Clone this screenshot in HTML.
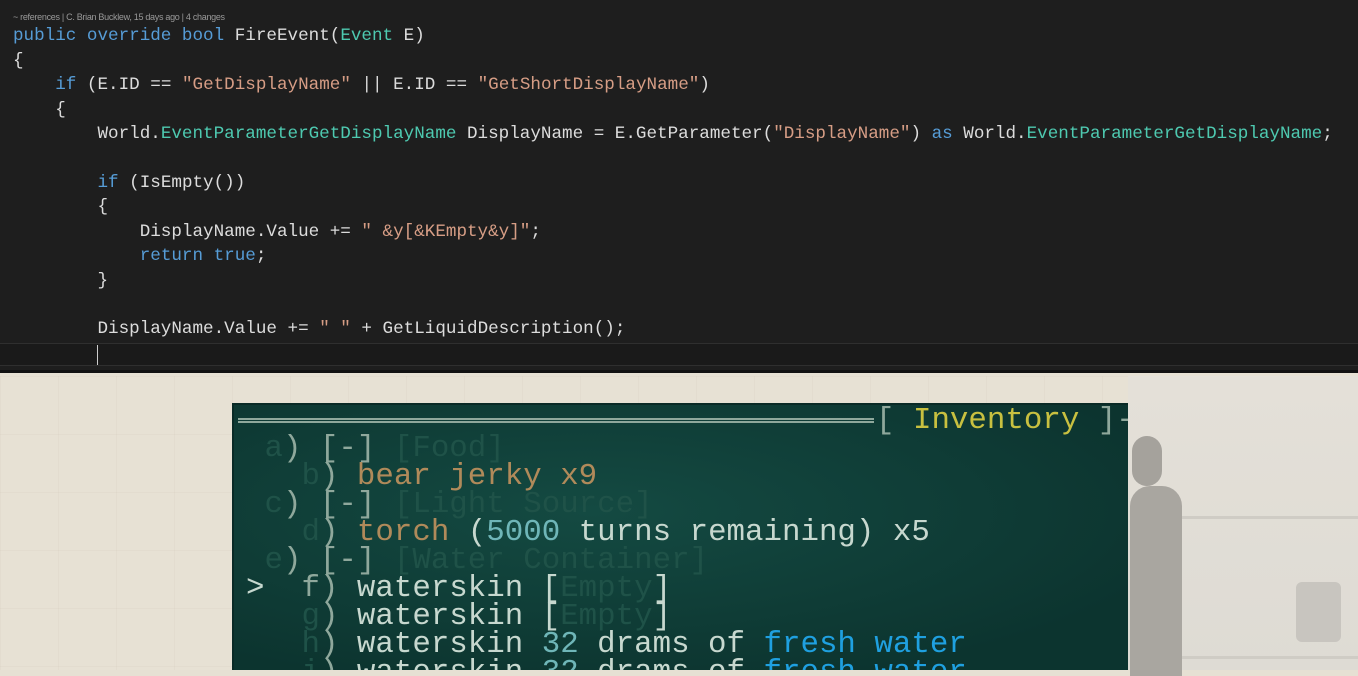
<!DOCTYPE html>
<html><head><meta charset="utf-8"><style>
*{margin:0;padding:0;box-sizing:border-box}
body{width:1358px;height:670px;overflow:hidden;background:#e6e0d3;position:relative;font-family:"Liberation Mono",monospace}
#code{position:absolute;left:0;top:0;width:1358px;height:373px;background:#1e1e1e;border-bottom:3px solid #111}
.ref{position:absolute;left:13px;top:12px;font:9px "Liberation Sans",sans-serif;color:#999;letter-spacing:-0.3px}
.ln{position:absolute;left:13px;font-size:17.6px;color:#dcdcdc;white-space:pre;line-height:24px}
.k{color:#569cd6}.t{color:#4ec9b0}.s{color:#d69d85}
.cur{position:absolute;left:0;top:343px;width:1358px;height:23px;border-top:1px solid #2f2f2f;border-bottom:1px solid #2f2f2f;background:#1a1a1a}
.caret{position:absolute;left:97px;top:345px;width:1px;height:20px;background:#ccc}
#grid{position:absolute;left:0;top:376px;width:1358px;height:294px;background:
linear-gradient(90deg,rgba(180,170,150,.08) 1px,transparent 1px) 0 0/58px 58px,
linear-gradient(rgba(180,170,150,.08) 1px,transparent 1px) 0 0/58px 58px,#e7e1d4}
#room{position:absolute;left:1128px;top:376px;width:230px;height:294px;background:linear-gradient(#e4e0d8,#dedbd4)}
#term{position:absolute;left:232px;top:403px;width:896px;height:267px;overflow:hidden;background:radial-gradient(ellipse at 40% 40%,#144a42,#0c342f 80%);border-left:2px solid #0a2a26;border-top:2px solid #0a2a26}
.tl{position:absolute;left:12px;font-size:30.8px;white-space:pre;color:#c7d8cf;line-height:28px}
.dim{color:#1f5248}.br{color:#8fa89c}.tan{color:#b08a5a}.cy{color:#6fb6b8}.bl{color:#1fa0e0}.yl{color:#c8c040}
</style></head><body>
<div id="code">
<div class="ref">~ references | C. Brian Bucklew, 15 days ago | 4 changes</div>
<div class="cur"></div><div class="caret"></div>
<div class="ln" style="top:24px"><span class="k">public override bool</span> FireEvent(<span class="t">Event</span> E)</div>
<div class="ln" style="top:49px">{</div>
<div class="ln" style="top:73px">    <span class="k">if</span> (E.ID == <span class="s">"GetDisplayName"</span> || E.ID == <span class="s">"GetShortDisplayName"</span>)</div>
<div class="ln" style="top:98px">    {</div>
<div class="ln" style="top:122px">        World.<span class="t">EventParameterGetDisplayName</span> DisplayName = E.GetParameter(<span class="s">"DisplayName"</span>) <span class="k">as</span> World.<span class="t">EventParameterGetDisplayName</span>;</div>
<div class="ln" style="top:171px">        <span class="k">if</span> (IsEmpty())</div>
<div class="ln" style="top:195px">        {</div>
<div class="ln" style="top:220px">            DisplayName.Value += <span class="s">" &amp;y[&amp;KEmpty&amp;y]"</span>;</div>
<div class="ln" style="top:244px">            <span class="k">return true</span>;</div>
<div class="ln" style="top:269px">        }</div>
<div class="ln" style="top:317px">        DisplayName.Value += <span class="s">" "</span> + GetLiquidDescription();</div>
</div>
<div id="grid"></div>
<div id="room">
<div style="position:absolute;left:40px;top:140px;width:190px;height:3px;background:#cfccc5"></div>
<div style="position:absolute;left:40px;top:280px;width:190px;height:3px;background:#cfccc5"></div>
<div style="position:absolute;left:2px;top:110px;width:52px;height:190px;background:#a9a6a0;border-radius:20px 20px 0 0"></div>
<div style="position:absolute;left:4px;top:60px;width:30px;height:50px;background:#a5a29c;border-radius:15px"></div>
<div style="position:absolute;left:168px;top:206px;width:45px;height:60px;background:#c8c5bf;border-radius:6px"></div>
</div>
<div id="term">
<div style="position:absolute;left:4px;top:13px;width:636px;height:5px;border-top:2px solid #8fa89c;border-bottom:2px solid #8fa89c"></div>
<div class="tl" style="left:642px;top:2px"><span class="br">[ </span><span class="yl">Inventory</span><span class="br"> ]-</span></div>
<div class="tl" style="top:30px"> <span class="dim">a</span><span class="br">) [-]</span> <span class="dim">[Food]</span></div>
<div class="tl" style="top:58px">   <span class="dim">b</span><span class="br">)</span> <span class="tan">bear jerky x9</span></div>
<div class="tl" style="top:86px"> <span class="dim">c</span><span class="br">) [-]</span> <span class="dim">[Light Source]</span></div>
<div class="tl" style="top:114px">   <span class="dim">d</span><span class="br">)</span> <span class="tan">torch</span> (<span class="cy">5000</span> turns remaining) x5</div>
<div class="tl" style="top:142px"> <span class="dim">e</span><span class="br">) [-]</span> <span class="dim">[Water Container]</span></div>
<div class="tl" style="top:170px">&gt;  <span class="br">f)</span> waterskin [<span class="dim">Empty</span>]</div>
<div class="tl" style="top:198px">   <span class="dim">g</span><span class="br">)</span> waterskin [<span class="dim">Empty</span>]</div>
<div class="tl" style="top:226px">   <span class="dim">h</span><span class="br">)</span> waterskin <span class="cy">32</span> drams of <span class="bl">fresh water</span></div>
<div class="tl" style="top:254px">   <span class="dim">i</span><span class="br">)</span> waterskin <span class="cy">32</span> drams of <span class="bl">fresh water</span></div>
</div>
</body></html>
